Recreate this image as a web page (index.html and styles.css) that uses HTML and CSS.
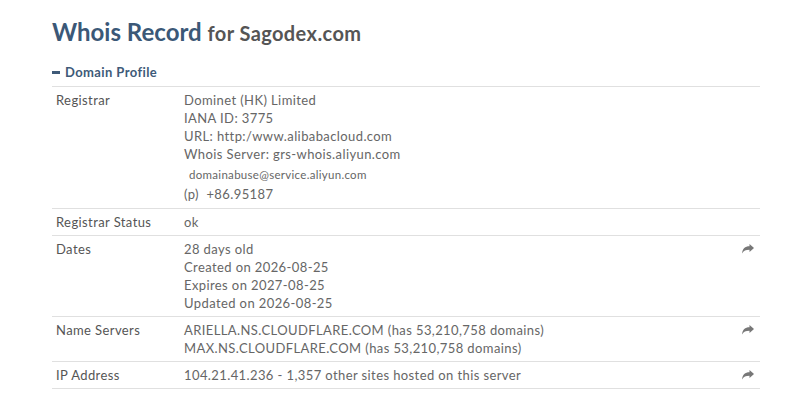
FILE: index.html
```html
<!DOCTYPE html>
<html>
<head>
    <title>Whois Record for Sagodex.com</title>
    <link rel="stylesheet" href="styles.css">
</head>
<body>
    <div class="page">
        <h1 class="title">Whois Record <span class="title-for">for Sagodex.com</span></h1>

        <div class="section-head"><span class="minus"></span>Domain Profile</div>

        <div class="record">
            <div class="row">
                <div class="label">Registrar</div>
                <div class="value">
                    <div>Dominet (HK) Limited</div>
                    <div>IANA ID: 3775</div>
                    <div>URL: http:/www.alibabacloud.com</div>
                    <div>Whois Server: grs-whois.aliyun.com</div>
                    <div class="email">domainabuse@service.aliyun.com</div>
                    <div class="phone">(p) &nbsp;+86.95187</div>
                </div>
                <div class="act"></div>
            </div>
            <div class="row">
                <div class="label">Registrar Status</div>
                <div class="value">ok</div>
                <div class="act"></div>
            </div>
            <div class="row">
                <div class="label">Dates</div>
                <div class="value">
                    <div>28 days old</div>
                    <div>Created on 2026-08-25</div>
                    <div>Expires on 2027-08-25</div>
                    <div>Updated on 2026-08-25</div>
                </div>
                <div class="act">
                    <svg class="share" viewBox="0 0 12 10" width="12" height="10"><path d="M12 4 L7.5 0 V2.3 C3 2.3 0.5 4.5 0 9.5 C1.5 6.8 3.8 5.8 7.5 5.8 V8 Z"/></svg>
                </div>
            </div>
            <div class="row">
                <div class="label">Name Servers</div>
                <div class="value">
                    <div>ARIELLA.NS.CLOUDFLARE.COM (has 53,210,758 domains)</div>
                    <div>MAX.NS.CLOUDFLARE.COM (has 53,210,758 domains)</div>
                </div>
                <div class="act">
                    <svg class="share" viewBox="0 0 12 10" width="12" height="10"><path d="M12 4 L7.5 0 V2.3 C3 2.3 0.5 4.5 0 9.5 C1.5 6.8 3.8 5.8 7.5 5.8 V8 Z"/></svg>
                </div>
            </div>
            <div class="row">
                <div class="label">IP Address</div>
                <div class="value">104.21.41.236 - 1,357 other sites hosted on this server</div>
                <div class="act">
                    <svg class="share" viewBox="0 0 12 10" width="12" height="10"><path d="M12 4 L7.5 0 V2.3 C3 2.3 0.5 4.5 0 9.5 C1.5 6.8 3.8 5.8 7.5 5.8 V8 Z"/></svg>
                </div>
            </div>
        </div>
    </div>
</body>
</html>
```

FILE: styles.css
```css
body {
    margin: 0;
    background: #fff;
    font-family: Lato, "Open Sans", sans-serif;
    color: #666;
}
.page {
    width: 708px;
    padding: 16px 0 0 52px;
}
.title {
    margin: 0;
    font-size: 24px;
    font-weight: bold;
    color: #3b5877;
    line-height: 32px;
}
.title-for {
    font-size: 20px;
    color: #555;
    letter-spacing: 0.4px;
}
.section-head {
    margin-top: 15px;
    display: flex;
    align-items: center;
    font-size: 13px;
    font-weight: bold;
    color: #3e5a78;
    line-height: 16px;
    letter-spacing: 0.4px;
    padding-bottom: 6px;
}
.minus {
    display: inline-block;
    width: 8px;
    height: 3px;
    background: #3e5a78;
    margin-right: 5px;
}
.record {
    border-top: 1px solid #e0e0e0;
}
.row {
    display: grid;
    grid-template-columns: 128px 1fr 30px;
    padding: 4px 0 4px 4px;
    border-bottom: 1px solid #e0e0e0;
    font-size: 13px;
    line-height: 18px;
    letter-spacing: 0.4px;
}
.label {
    color: #555;
}
.value {
    color: #666;
}
.email {
    font-size: 11.5px;
    line-height: 21px;
    padding-left: 5px;
    padding-top: 1px;
    letter-spacing: 0.3px;
}
.phone {
    line-height: 19px;
}
.act {
    text-align: right;
    padding-right: 6px;
}
.share {
    fill: #777;
    margin-top: 3px;
}
```
